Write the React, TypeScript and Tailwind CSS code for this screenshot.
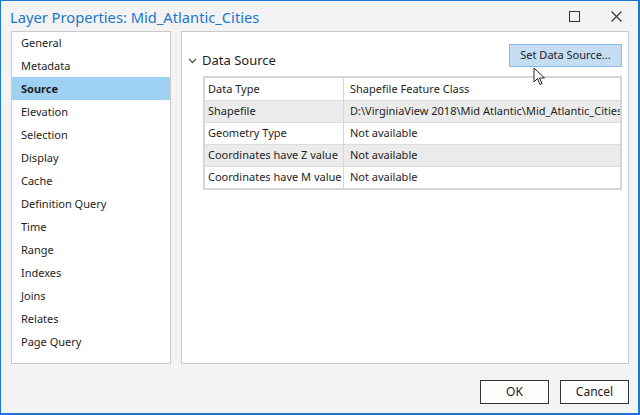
import React from "react";

const items = [
  "General",
  "Metadata",
  "Source",
  "Elevation",
  "Selection",
  "Display",
  "Cache",
  "Definition Query",
  "Time",
  "Range",
  "Indexes",
  "Joins",
  "Relates",
  "Page Query",
];

const rows: [string, string][] = [
  ["Data Type", "Shapefile Feature Class"],
  ["Shapefile", "D:\\VirginiaView 2018\\Mid Atlantic\\Mid_Atlantic_Cities.shp"],
  ["Geometry Type", "Not available"],
  ["Coordinates have Z value", "Not available"],
  ["Coordinates have M value", "Not available"],
];

export default function App() {
  return (
    <div
      className="relative w-[640px] h-[415px] overflow-hidden border border-r-2 border-b-2 border-[#1a78cf] bg-[#f3f3f3] text-[#1e1e1e] flex flex-col"
      style={{ fontFamily: '"Noto Sans", "Open Sans", sans-serif' }}
    >
      {/* Title bar */}
      <div className="h-[30px] flex items-center pl-[9px] pr-[16px] shrink-0">
        <div className="text-[14.7px] text-[#1a78cf] leading-none flex-1 pt-[2px]">
          Layer Properties: Mid_Atlantic_Cities
        </div>
        <svg width="11" height="11" viewBox="0 0 11 11" className="mr-[31px]">
          <rect x="0.5" y="0.5" width="10" height="10" fill="none" stroke="#333" strokeWidth="1" />
        </svg>
        <svg width="11" height="11" viewBox="0 0 11 11">
          <path d="M0.5 0.5 L10.5 10.5 M10.5 0.5 L0.5 10.5" stroke="#333" strokeWidth="1.1" />
        </svg>
      </div>

      {/* Content */}
      <div className="flex gap-[10px] pl-[10px] h-[333px] shrink-0">
        <div className="w-[160px] border border-[#c9c9c9] bg-white text-[11px] flex flex-col">
          {items.map((it, i) => (
            <div
              key={it}
              className={
                "h-[23px] flex items-center pl-[9px] pt-[1px] " +
                (i === 0 ? "-mt-[1px] " : "") +
                (it === "Source" ? "bg-[#9fd1f2] font-bold" : "")
              }
            >
              {it}
            </div>
          ))}
        </div>

        <div className="relative w-[448px] border border-[#c9c9c9] bg-white pt-[12px] pl-[7px] pr-[6px]">
          <div className="flex items-start">
            <div className="flex items-center pt-[7px] flex-1">
              <svg width="9" height="6" viewBox="0 0 9 6" className="mr-[5px] -ml-[1px]">
                <path d="M1 1 L4.5 4.5 L8 1" fill="none" stroke="#555" strokeWidth="1.3" />
              </svg>
              <span className="text-[13px] leading-[19px]">Data Source</span>
            </div>
            <button className="w-[113px] h-[23px] bg-[#c4ddf3] border border-[#8cbbe8] text-[11px] text-[#1e1e1e] flex items-center justify-center">
              Set Data Source...
            </button>
          </div>

          <div className="ml-[14px] mt-[6px] border-2 border-[#d6d6d6] text-[11px]">
            {rows.map(([a, b], i) => (
              <div
                key={a}
                className={
                  "flex h-[22px] " +
                  (i > 0 ? "border-t border-[#dcdcdc] " : "h-[21px] ") +
                  (i % 2 === 1 ? "bg-[#ebebeb]" : "bg-white")
                }
              >
                <div className="w-[139px] pl-[3px] flex items-center border-r border-[#d6d6d6] whitespace-nowrap overflow-hidden">
                  {a}
                </div>
                <div className="flex-1 pl-[6px] flex items-center whitespace-nowrap overflow-hidden">
                  {b}
                </div>
              </div>
            ))}
          </div>

          {/* cursor */}
          <svg
            width="14"
            height="20"
            viewBox="0 0 14 20"
            className="absolute left-[351px] top-[35px]"
          >
            <path
              d="M1 1 L1 15 L4.5 11.5 L7 17.5 L9 16.7 L6.6 11 L11.5 11 Z"
              fill="white"
              stroke="#222"
              strokeWidth="1"
              strokeLinejoin="miter"
            />
          </svg>
        </div>
      </div>

      {/* Footer */}
      <div className="flex-1 flex justify-end items-start pt-[16px] pr-[9px] gap-[11px]">
        <button className="w-[69px] h-[24px] border border-[#333] bg-[#fdfdfd] text-[12px]">
          OK
        </button>
        <button className="w-[69px] h-[24px] border border-[#333] bg-[#fdfdfd] text-[12px]">
          Cancel
        </button>
      </div>
    </div>
  );
}
